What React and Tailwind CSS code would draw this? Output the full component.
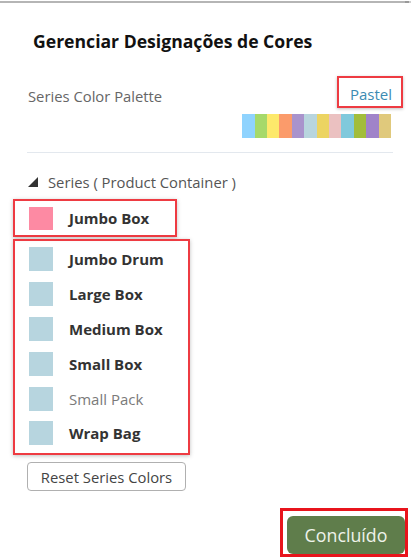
import React from "react";

const palette = [
  "#8fd3fe", "#a6d96a", "#fde96b", "#fb9b6b", "#a993cc", "#b8d5de",
  "#ecd462", "#ebc1c1", "#80c9dc", "#a2bd3b", "#a083c9", "#e0c97c",
];

const rows = [
  { name: "Jumbo Drum", bold: true },
  { name: "Large Box", bold: true },
  { name: "Medium Box", bold: true },
  { name: "Small Box", bold: true },
  { name: "Small Pack", bold: false },
  { name: "Wrap Bag", bold: true },
];

function Row({ name, bold, color }) {
  return (
    <div className="flex items-center h-[34.8px]">
      <div className="w-[24px] h-[24px] ml-[14px]" style={{ backgroundColor: color }} />
      <span
        className={
          bold
            ? "ml-[16px] text-[15px] leading-[20px] font-bold text-[#333333]"
            : "ml-[16px] text-[15px] leading-[20px] text-[#7a7a7a]"
        }
      >
        {name}
      </span>
    </div>
  );
}

export default function App() {
  return (
    <div
      className="w-[411px] h-[559px] bg-white overflow-hidden flex flex-col"
      style={{ fontFamily: '"Open Sans", "Noto Sans", sans-serif' }}
    >
      <div className="flex mt-[1px] h-[2px]">
        <div className="flex-1 bg-[#b5b5b5]" />
        <div className="w-[4px] bg-[#999999]" />
        <div className="w-[2px] bg-[#cfcfcf]" />
      </div>

      <div className="pl-[33px] mt-[27px] text-[17.6px] leading-[22px] font-bold text-[#111111] whitespace-nowrap">
        Gerenciar Designações de Cores
      </div>

      <div className="flex items-center justify-between mt-[24px] pl-[28px] pr-[8px] h-[32px]">
        <span className="text-[14.8px] leading-[20px] text-[#666666] mt-[7px]">Series Color Palette</span>
        <div className="border-2 border-[#ee3b42] w-[66px] h-[32px] flex items-center pl-[11px] pt-[3px] shadow-[0_1px_3px_rgba(0,0,0,0.25)]">
          <span className="text-[15px] leading-[20px] text-[#3b8bb3]">Pastel</span>
        </div>
      </div>

      <div className="flex justify-end pr-[20px] mt-[6px]">
        {palette.map((c) => (
          <div key={c} className="w-[12.4px] h-[24px]" style={{ backgroundColor: c }} />
        ))}
      </div>

      <div className="ml-[27px] mr-[18px] mt-[14px] h-[1px] bg-[#e3e8ee]" />

      <div className="flex items-center pl-[28px] mt-[20px] h-[18px]">
        <svg width="11" height="11" viewBox="0 0 11 11">
          <polygon points="10,0 10,10 0,10" fill="#333333" />
        </svg>
        <span className="ml-[9px] text-[14.8px] leading-[18px] text-[#555555]">Series ( Product Container )</span>
      </div>

      <div className="ml-[13px] mt-[8px] w-[164px] h-[38px] border-2 border-[#ee3b42] flex items-center shadow-[0_1px_4px_rgba(0,0,0,0.25)]">
        <div className="w-[24px] h-[23px] ml-[14px] bg-[#fd8aa3]" />
        <span className="ml-[16px] text-[15px] leading-[20px] font-bold text-[#333333]">Jumbo Box</span>
      </div>

      <div className="ml-[13px] mt-[2px] w-[177px] h-[216px] border-2 border-[#ee3b42] flex flex-col pt-[1px] shadow-[0_1px_4px_rgba(0,0,0,0.25)]">
        {rows.map((r) => (
          <Row key={r.name} name={r.name} bold={r.bold} color="#b7d5df" />
        ))}
      </div>

      <div className="ml-[27px] mt-[7px] w-[159px] h-[29px] border border-[#b0b0b0] rounded-[4px] flex items-center justify-center text-[14.8px] leading-[20px] text-[#444444]">
        Reset Series Colors
      </div>

      <div className="flex justify-end pr-[3px] mt-[17px]">
        <div className="border-[3px] border-[#e8141c] w-[128px] h-[49px] flex items-end justify-end">
          <div className="w-[118px] h-[38px] bg-[#5f7d4b] rounded-[6px] flex items-center justify-center text-[17.8px] text-[#eef3ea]">
            Concluído
          </div>
        </div>
      </div>
    </div>
  );
}
